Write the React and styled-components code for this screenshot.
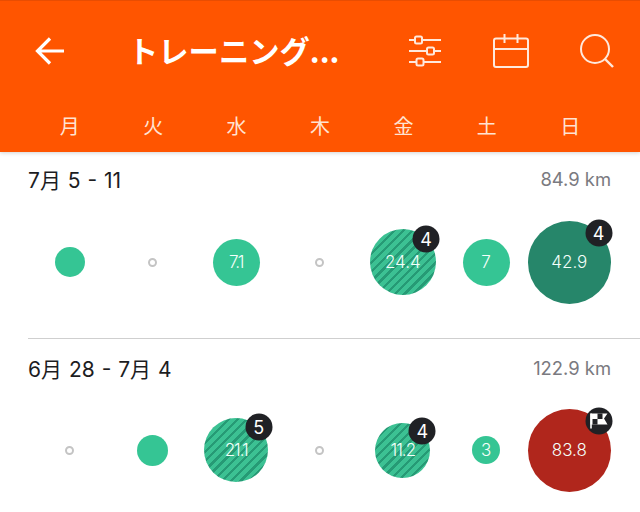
import React from 'react';
import styled, { createGlobalStyle } from 'styled-components';

const GlobalStyle = createGlobalStyle`
  html, body {
    margin: 0;
    background: #fff;
    font-family: Inter, "Noto Sans CJK JP", sans-serif;
  }
`;

const Page = styled.div`
  width: 640px;
  height: 512px;
  overflow: hidden;
  background: #fff;
`;

const Header = styled.header`
  position: relative;
  height: 152px;
  box-sizing: border-box;
  padding: 0 28px;
  background: #ff5500;
  border-top: 1px solid #e84d02;
  box-shadow: 0 1px 4px rgba(0, 0, 0, 0.18);
`;

const Toolbar = styled.div`
  display: flex;
  align-items: center;
  height: 100px;
  margin-bottom: 2px;
  color: #fff;
`;

const BackButton = styled.div`
  display: flex;
  width: 100px;
  margin-left: 7px;
  margin-right: -7px;
`;

const Title = styled.h1`
  flex: 1;
  margin: -2px 0 0;
  font: 700 30.300px "Noto Sans CJK JP", sans-serif;
  color: #fff;
`;

const Actions = styled.div`
  display: flex;
  align-items: center;
  gap: 51px;
  margin-right: -2px;
`;

const DayRow = styled.div`
  display: grid;
  grid-template-columns: repeat(7, 1fr);
  height: 46px;
`;

const Day = styled.div`
  text-align: center;
  font: 400 20px/46px "Noto Sans CJK JP", sans-serif;
  color: #ffe3d2;
`;

const Week = styled.section`
  margin-left: 28px;
  padding: ${({ $top }) => $top}px 29px 0 0;
  height: ${({ $height }) => $height}px;
  box-sizing: border-box;
  border-bottom: ${({ $divider }) => ($divider ? '1px solid #cfcfcf' : 'none')};
`;

const WeekHeader = styled.div`
  display: flex;
  justify-content: space-between;
  align-items: center;
  height: 28px;
  margin-bottom: ${({ $gap }) => $gap}px;
`;

const WeekTitle = styled.h2`
  margin: 0;
  font: 400 21px Inter, "Noto Sans CJK JP", sans-serif;
  word-spacing: 1px;
  color: #1d1d1f;
`;

const Distance = styled.span`
  font: 400 18.400px Inter, sans-serif;
  color: #7a7a80;
`;

const BubbleRow = styled.div`
  display: grid;
  grid-template-columns: repeat(7, 1fr);
  height: 100px;
`;

const Cell = styled.div`
  display: flex;
  align-items: center;
  justify-content: center;
`;

const fills = {
  light: '#35c594',
  dark: '#26866a',
  red: '#b0261c',
  striped: 'repeating-linear-gradient(135deg, #3cc193 0 4px, #269a75 4px 6.500px)',
};

const Bubble = styled.div`
  position: relative;
  display: flex;
  align-items: center;
  justify-content: center;
  width: ${({ $size }) => $size}px;
  height: ${({ $size }) => $size}px;
  border-radius: 50%;
  background: ${({ $fill }) => fills[$fill]};
  color: #f4fffa;
  font: 300 17px Inter, sans-serif;
  letter-spacing: ${({ $tight }) => ($tight ? '-1px' : '0')};
`;

const RestDot = styled.div`
  width: 9px;
  height: 9px;
  box-sizing: border-box;
  border: 2px solid #c4c4c4;
  border-radius: 50%;
`;

// badge sits on the bubble's edge at 45 degrees
const Badge = styled.div`
  position: absolute;
  left: 85.35%;
  top: 14.65%;
  transform: translate(-50%, -50%);
  display: flex;
  align-items: center;
  justify-content: center;
  width: 27px;
  height: 27px;
  border-radius: 50%;
  background: #202125;
  color: #fff;
  font: 400 18px Inter, sans-serif;
  letter-spacing: 0;
`;

const BackIcon = () => (
  <svg width="30" height="28" viewBox="0 0 30 28" fill="none" stroke="#fff" strokeWidth="3.2">
    <path d="M29 14H3M15 1.500 2.500 14 15 26.500" />
  </svg>
);

const SlidersIcon = () => (
  <svg width="34" height="34" viewBox="0 0 34 34" fill="none" stroke="#ffe9dc" strokeWidth="2">
    <path d="M1 6h32M1 17h32M1 28h32" />
    <rect x="7" y="2.500" width="7" height="7" rx="1.500" fill="#ff5500" />
    <rect x="19" y="13.500" width="7" height="7" rx="1.500" fill="#ff5500" />
    <rect x="8.500" y="24.500" width="7" height="7" rx="1.500" fill="#ff5500" />
  </svg>
);

const CalendarIcon = () => (
  <svg width="36" height="34" viewBox="0 0 36 34" fill="none" stroke="#ffe9dc" strokeWidth="2">
    <rect x="1" y="4.500" width="34" height="28.500" rx="2" />
    <path d="M1 15h34M11.500 0v9M24.500 0v9" />
  </svg>
);

const SearchIcon = () => (
  <svg width="34" height="34" viewBox="0 0 34 34" fill="none" stroke="#ffe9dc" strokeWidth="2">
    <circle cx="15" cy="15" r="14" />
    <path d="M25 25 33 33" strokeWidth="2.400" />
  </svg>
);

const FlagIcon = () => (
  <svg width="19" height="17" viewBox="0 0 19 17">
    <path d="M1 1h17l-3.500 5 3.500 6H1z" fill="#fff" />
    <path d="M8 1h5v5.500H8zM3 6.500h5V12H3z" fill="#202125" />
    <path d="M1.500 1v15" stroke="#fff" strokeWidth="1.600" />
  </svg>
);

const days = ['月', '火', '水', '木', '金', '土', '日'];

const weeks = [
  {
    title: '7月 5 - 11',
    distance: '84.9 km',
    top: 13,
    gap: 19,
    height: 187,
    divider: true,
    items: [
      { size: 30, fill: 'light' },
      null,
      { size: 47, fill: 'light', label: '7.1', tight: true },
      null,
      { size: 66, fill: 'striped', label: '24.4', badge: '4' },
      { size: 47, fill: 'light', label: '7' },
      { size: 83, fill: 'dark', label: '42.9', badge: '4' },
    ],
  },
  {
    title: '6月 28 - 7月 4',
    distance: '122.9 km',
    top: 15,
    gap: 18,
    height: 173,
    items: [
      null,
      { size: 31, fill: 'light' },
      { size: 64, fill: 'striped', label: '21.1', badge: '5', tight: true },
      null,
      { size: 55, fill: 'striped', label: '11.2', badge: '4', tight: true },
      { size: 28, fill: 'light', label: '3' },
      { size: 83, fill: 'red', label: '83.8', flag: true },
    ],
  },
];

const App = () => (
  <Page>
    <GlobalStyle />
    <Header>
      <Toolbar>
        <BackButton>
          <BackIcon />
        </BackButton>
        <Title>トレーニング...</Title>
        <Actions>
          <SlidersIcon />
          <CalendarIcon />
          <SearchIcon />
        </Actions>
      </Toolbar>
      <DayRow>
        {days.map((day) => (
          <Day key={day}>{day}</Day>
        ))}
      </DayRow>
    </Header>
    {weeks.map((week) => (
      <Week key={week.title} $top={week.top} $height={week.height} $divider={week.divider}>
        <WeekHeader $gap={week.gap}>
          <WeekTitle>{week.title}</WeekTitle>
          <Distance>{week.distance}</Distance>
        </WeekHeader>
        <BubbleRow>
          {week.items.map((item, i) => (
            <Cell key={i}>
              {item ? (
                <Bubble $size={item.size} $fill={item.fill} $tight={item.tight}>
                  {item.label}
                  {item.badge && <Badge>{item.badge}</Badge>}
                  {item.flag && (
                    <Badge>
                      <FlagIcon />
                    </Badge>
                  )}
                </Bubble>
              ) : (
                <RestDot />
              )}
            </Cell>
          ))}
        </BubbleRow>
      </Week>
    ))}
  </Page>
);

export default App;
